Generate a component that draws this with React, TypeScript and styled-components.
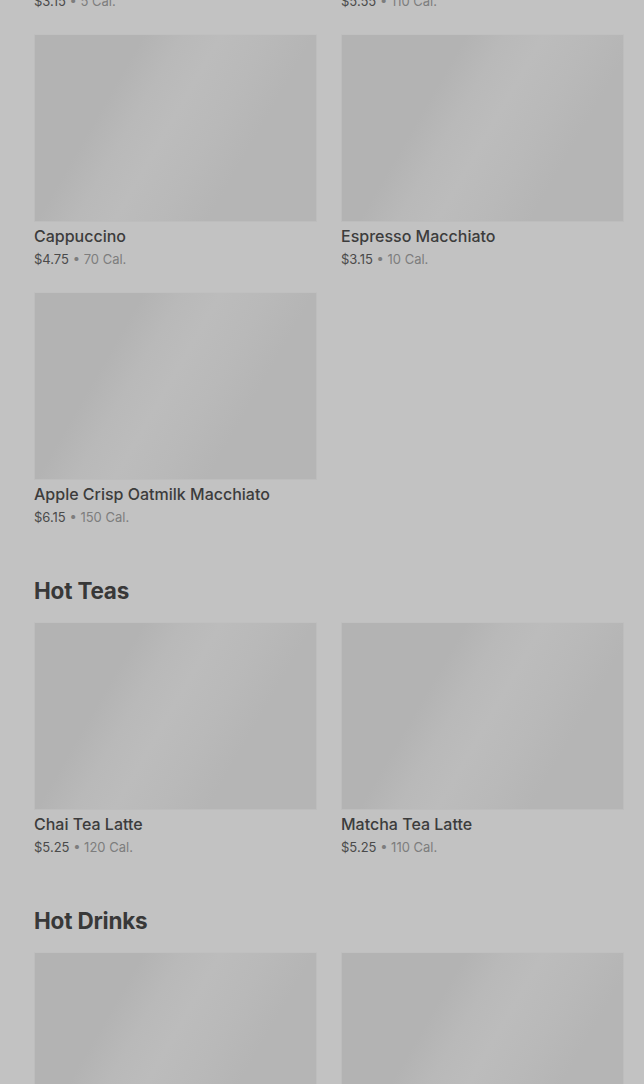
import * as React from "react";
import styled, { createGlobalStyle } from "styled-components";

const GlobalStyle = createGlobalStyle`
	html, body {
		margin: 0;
		padding: 0;
		background: #c2c2c2;
		font-family: Inter, "Noto Sans", "Liberation Sans", sans-serif;
		overflow: hidden;
	}
	* { box-sizing: border-box; }
`;

// the page is scrolled part way into the menu
const Page = styled.div`
	padding: 0 20px 0 34px;
	margin-top: -224px;
`;

const Section = styled.section`
	& + & { margin-top: 50px; }
`;

const Heading = styled.h2`
	margin: 0 0 17px;
	font-size: 22.5px;
	line-height: 28px;
	font-weight: 700;
	letter-spacing: -0.2px;
	color: #383838;
`;

const Grid = styled.div`
	display: grid;
	grid-template-columns: 1fr 1fr;
	column-gap: 24px;
	row-gap: 23px;
`;

const Card = styled.div`
	display: flex;
	flex-direction: column;
`;

const Thumb = styled.div<{ $shift: number }>`
	height: 188px;
	border: 1px solid #bdbdbd;
	border-top-color: #c0c0c0;
	background: linear-gradient(
		120deg,
		#b3b3b3 0%,
		#b3b3b3 ${(p) => 28 + p.$shift}%,
		#b9b9b9 ${(p) => 38 + p.$shift}%,
		#bcbcbc ${(p) => 48 + p.$shift}%,
		#b9b9b9 ${(p) => 60 + p.$shift}%,
		#b5b5b5 ${(p) => 72 + p.$shift}%,
		#b5b5b5 100%
	);
	margin-bottom: 3px;
`;

const Title = styled.div`
	font-size: 16px;
	line-height: 22px;
	font-weight: 500;
	color: #3c3c3c;
	margin-bottom: 2px;
`;

const Meta = styled.div`
	font-size: 13px;
	line-height: 20px;
	color: #7d7d7d;
	& b {
		font-weight: 400;
		color: #4a4a4a;
	}
`;

type Item = { name: string; price: string; cal: string };

const sections: { title?: string; items: Item[] }[] = [
	{
		items: [
			{ name: "Espresso", price: "$3.15", cal: "5 Cal." },
			{ name: "Caffè Latte", price: "$5.55", cal: "110 Cal." },
			{ name: "Cappuccino", price: "$4.75", cal: "70 Cal." },
			{ name: "Espresso Macchiato", price: "$3.15", cal: "10 Cal." },
			{ name: "Apple Crisp Oatmilk Macchiato", price: "$6.15", cal: "150 Cal." },
		],
	},
	{
		title: "Hot Teas",
		items: [
			{ name: "Chai Tea Latte", price: "$5.25", cal: "120 Cal." },
			{ name: "Matcha Tea Latte", price: "$5.25", cal: "110 Cal." },
		],
	},
	{
		title: "Hot Drinks",
		items: [
			{ name: "Hot Chocolate", price: "$4.45", cal: "370 Cal." },
			{ name: "Steamed Milk", price: "$3.65", cal: "200 Cal." },
		],
	},
];

const MenuItem = ({ item, i }: { item: Item; i: number }) => (
	<Card>
		<Thumb $shift={i % 2 ? 4 : 0} />
		<Title>{item.name}</Title>
		<Meta>
			<b>{item.price}</b> • {item.cal}
		</Meta>
	</Card>
);

export default function App() {
	return (
		<>
			<GlobalStyle />
			<Page>
				{sections.map((s, si) => (
					<Section key={si}>
						{s.title && <Heading>{s.title}</Heading>}
						<Grid>
							{s.items.map((it, i) => (
								<MenuItem key={it.name} item={it} i={i} />
							))}
						</Grid>
					</Section>
				))}
			</Page>
		</>
	);
}
